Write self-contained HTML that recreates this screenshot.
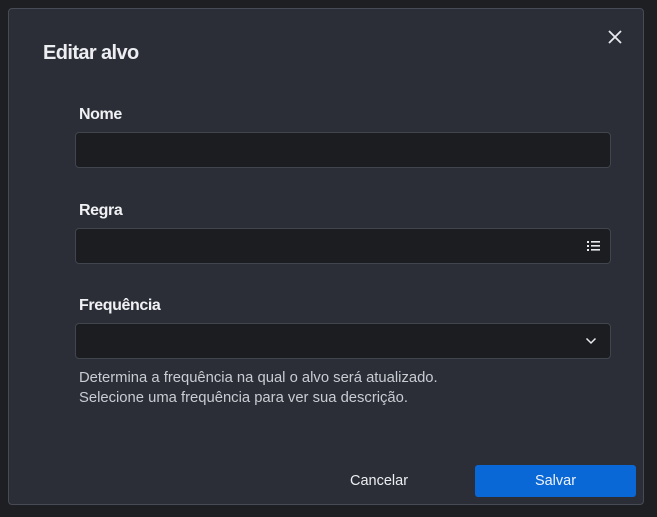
<!DOCTYPE html>
<html><head><style>
body{margin:0;width:657px;height:517px;background:#1e1f23;font-family:"Liberation Sans",sans-serif;position:relative;overflow:hidden}
.m{position:absolute;left:8px;top:8px;width:636px;height:497px;background:#2b2e36;border:1px solid #474b55;border-radius:4px;box-sizing:border-box}
.t{position:absolute;left:34px;top:33px;color:#eceef2;font-size:20px;font-weight:bold;letter-spacing:-0.6px}
.l{position:absolute;left:70px;color:#f0f1f4;font-size:16px;font-weight:bold;letter-spacing:-0.4px}
.i{position:absolute;left:66px;width:536px;height:36px;background:#1c1d21;border:1px solid #41454e;border-radius:4px;box-sizing:border-box}
.d{position:absolute;left:70px;top:359px;color:#c9ccd3;font-size:14.8px;line-height:20px}
.b{position:absolute;left:466px;top:456px;width:161px;height:32px;background:#0a67d6;border-radius:3px;color:#eef3fb;font-size:14.5px;text-align:center;line-height:32px}
.c{position:absolute;left:341px;top:464px;color:#eceef2;font-size:14.5px}
</style></head><body>
<div class="m">
<div class="t">Editar alvo</div>
<svg style="position:absolute;left:599px;top:21px" width="14" height="14" viewBox="0 0 14 14"><path d="M1 1L13 13M13 1L1 13" stroke="#e8eaee" stroke-width="1.8"/></svg>
<div class="l" style="top:97px">Nome</div>
<div class="i" style="top:123px"></div>
<div class="l" style="top:193px">Regra</div>
<div class="i" style="top:219px"><svg style="position:absolute;left:511px;top:11px" width="14" height="12" viewBox="0 0 14 12"><g fill="#e8eaee"><rect x="0" y="1" width="2" height="2"/><rect x="0" y="5" width="2" height="2"/><rect x="0" y="9" width="2" height="2"/><rect x="4" y="1" width="9" height="1.6"/><rect x="4" y="5" width="9" height="1.6"/><rect x="4" y="9" width="9" height="1.6"/></g></svg></div>
<div class="l" style="top:288px">Frequência</div>
<div class="i" style="top:314px"><svg style="position:absolute;left:509px;top:13px" width="12" height="8" viewBox="0 0 12 8"><path d="M1.5 1.5L6 6L10.5 1.5" stroke="#e8eaee" stroke-width="1.5" fill="none"/></svg></div>
<div class="d">Determina a frequência na qual o alvo será atualizado.<br>Selecione uma frequência para ver sua descrição.</div>
<div class="c">Cancelar</div>
<div class="b">Salvar</div>
</div>
</body></html>
